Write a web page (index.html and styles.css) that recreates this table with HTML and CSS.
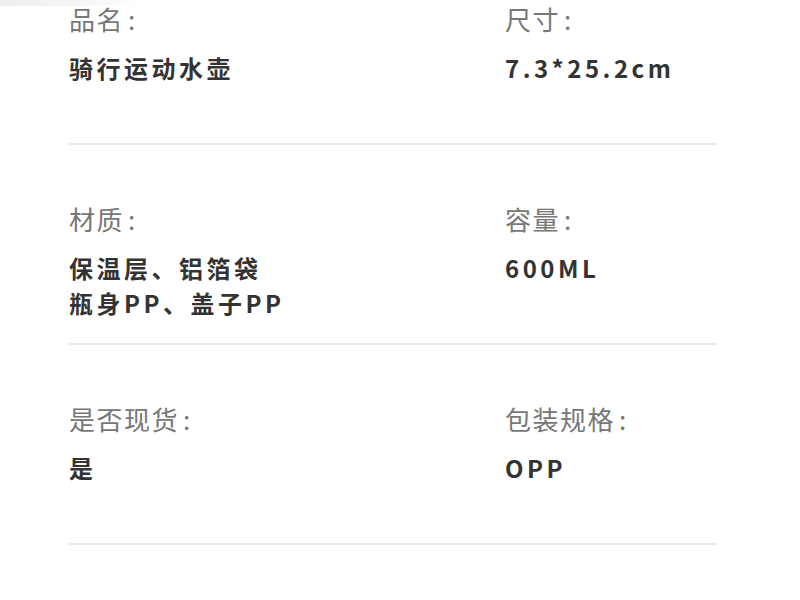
FILE: index.html
```html
<!DOCTYPE html>
<html lang="zh-CN">
<head>
<meta charset="utf-8">
<title>商品参数</title>
<link rel="stylesheet" href="styles.css">
</head>
<body>
<div class="topband"></div>
<div class="specs">
  <div class="row first">
    <div class="cell">
      <div class="label">品名<span class="colon">:</span></div>
      <div class="value">骑行运动水壶</div>
    </div>
    <div class="cell">
      <div class="label">尺寸<span class="colon">:</span></div>
      <div class="value">7.3*25.2cm</div>
    </div>
  </div>
  <div class="row">
    <div class="cell">
      <div class="label">材质<span class="colon">:</span></div>
      <div class="value">保温层、铝箔袋<br>瓶身PP、盖子PP</div>
    </div>
    <div class="cell">
      <div class="label">容量<span class="colon">:</span></div>
      <div class="value">600ML</div>
    </div>
  </div>
  <div class="row">
    <div class="cell">
      <div class="label">是否现货<span class="colon">:</span></div>
      <div class="value">是</div>
    </div>
    <div class="cell">
      <div class="label">包装规格<span class="colon">:</span></div>
      <div class="value">OPP</div>
    </div>
  </div>
</div>
</body>
</html>
```
FILE: styles.css
```css
html, body {
  margin: 0;
  padding: 0;
  background: #ffffff;
}
body {
  position: relative;
  width: 800px;
  height: 600px;
  overflow: hidden;
  font-family: "Noto Sans CJK SC", "Noto Sans", sans-serif;
}
.topband {
  position: absolute;
  left: 0;
  top: 0;
  width: 140px;
  height: 6px;
  background: linear-gradient(to right, #efefef, #f6f6f6 60%, rgba(255,255,255,0));
}
.specs {
  margin-left: 69px;
  width: 648px;
}
.row {
  box-sizing: border-box;
  height: 200px;
  padding-top: 56px;
  border-bottom: 2px solid #e8e8e8;
  display: grid;
  grid-template-columns: 436px 1fr;
}
.row.first {
  height: 145px;
  padding-top: 1px;
}
.label {
  font-size: 26px;
  line-height: 36px;
  color: #777777;
  letter-spacing: 1.5px;
}
.colon {
  padding-left: 4px;
}
.value {
  margin-top: 13px;
  font-size: 24px;
  line-height: 35px;
  font-weight: 700;
  color: #333333;
  letter-spacing: 3.5px;
}
```
